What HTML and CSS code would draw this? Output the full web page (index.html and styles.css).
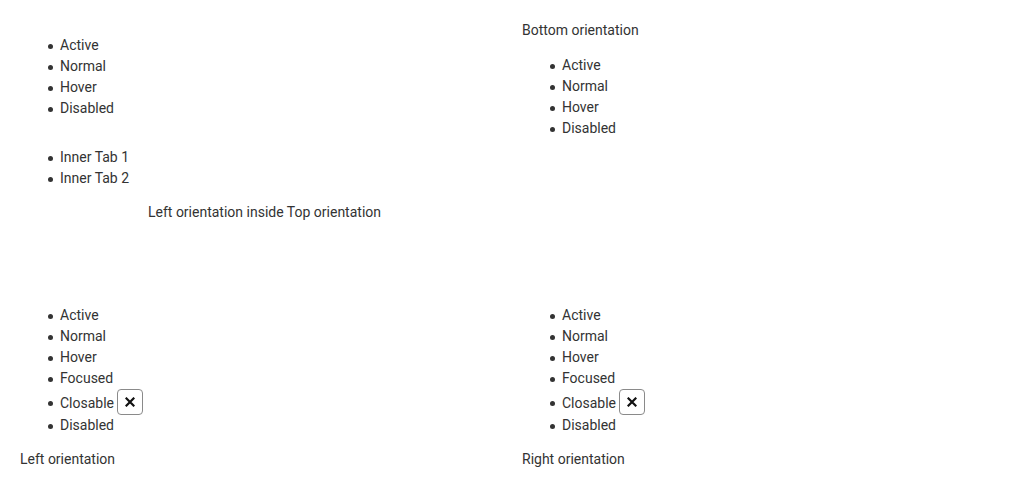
FILE: index.html
```html
<!DOCTYPE html>
<html>
<head>
<meta charset="utf-8">
<link rel="stylesheet" href="styles.css">
</head>
<body>
<div class="grid">
  <div class="cell cell-top-left">
    <ul class="tabs">
      <li>Active</li>
      <li>Normal</li>
      <li>Hover</li>
      <li>Disabled</li>
    </ul>
    <div class="inner">
      <ul class="tabs">
        <li>Inner Tab 1</li>
        <li>Inner Tab 2</li>
      </ul>
      <div class="label inner-label">Left orientation inside Top orientation</div>
    </div>
  </div>
  <div class="cell">
    <div class="label">Bottom orientation</div>
    <ul class="tabs">
      <li>Active</li>
      <li>Normal</li>
      <li>Hover</li>
      <li>Disabled</li>
    </ul>
  </div>
  <div class="cell">
    <ul class="tabs bottom-list">
      <li>Active</li>
      <li>Normal</li>
      <li>Hover</li>
      <li>Focused</li>
      <li class="closable"><span class="tab-text">Closable</span><button class="close" type="button" aria-label="Close"><svg width="10" height="10" viewBox="0 0 10 10"><path d="M1.5 1.5 L8.5 8.5 M8.5 1.5 L1.5 8.5" stroke="#111" stroke-width="2.2" stroke-linecap="square"/></svg></button></li>
      <li>Disabled</li>
    </ul>
    <div class="label">Left orientation</div>
  </div>
  <div class="cell">
    <ul class="tabs bottom-list">
      <li>Active</li>
      <li>Normal</li>
      <li>Hover</li>
      <li>Focused</li>
      <li class="closable"><span class="tab-text">Closable</span><button class="close" type="button" aria-label="Close"><svg width="10" height="10" viewBox="0 0 10 10"><path d="M1.5 1.5 L8.5 8.5 M8.5 1.5 L1.5 8.5" stroke="#111" stroke-width="2.2" stroke-linecap="square"/></svg></button></li>
      <li>Disabled</li>
    </ul>
    <div class="label">Right orientation</div>
  </div>
</div>
</body>
</html>
```
FILE: styles.css
```css
html, body {
  margin: 0;
  background: #fff;
}
body {
  padding: 20px 0 0 20px;
  font-family: Roboto, "Liberation Sans", sans-serif;
  font-size: 14px;
  line-height: 21px;
  color: #333;
}
.grid {
  display: grid;
  grid-template-columns: 502px 502px;
  row-gap: 68px;
}
.cell-top-left {
  padding-top: 1px;
}
.tabs {
  margin: 14px 0;
  padding-left: 40px;
  list-style: none;
}
.tabs li::before {
  content: "";
  display: inline-block;
  width: 5px;
  height: 5px;
  border-radius: 50%;
  background: #333;
  margin-left: -12px;
  margin-right: 7px;
  vertical-align: middle;
}
.bottom-list {
  margin-bottom: 13px;
}
.inner {
  display: flow-root;
}
.inner-label {
  padding-left: 128px;
  margin-top: -1px;
}
.tabs li.closable {
  display: flex;
  align-items: flex-start;
  height: 26px;
}
.tabs li.closable::before {
  flex: none;
  margin-top: 12px;
}
.tab-text {
  padding-top: 4px;
  margin-right: 3px;
}
.close {
  display: inline-flex;
  align-items: center;
  justify-content: center;
  flex: none;
  width: 26px;
  height: 26px;
  padding: 0;
  margin: 0;
  border: 1px solid #8a8a8a;
  border-radius: 4px;
  background: #fff;
  box-sizing: border-box;
}
```
